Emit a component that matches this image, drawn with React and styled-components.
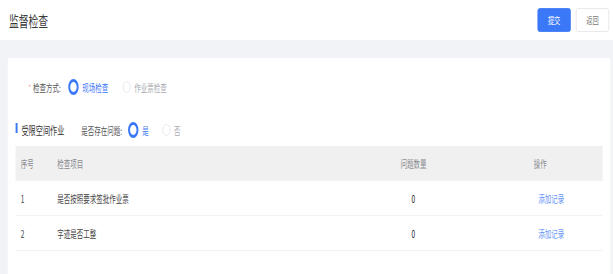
import styled, { createGlobalStyle } from "styled-components";

const GlobalStyle = createGlobalStyle`
  html, body {
    margin: 0;
    padding: 0;
    overflow: hidden;
    background: #f2f3f6;
  }
  * {
    box-sizing: border-box;
  }
`;

const FONT = `"Noto Sans CJK SC", "Noto Sans", sans-serif`;
const BLUE = "#3b78f7";

// the reference is a narrowed capture: lay out wide, then squeeze on x
const Page = styled.div`
  width: 943px;
  min-height: 274px;
  background: #f2f3f6;
  font-family: ${FONT};
  transform: scaleX(0.65);
  transform-origin: 0 0;
`;

const Header = styled.header`
  height: 40px;
  background: #ffffff;
  display: flex;
  align-items: center;
  padding: 0 6px 0 14px;
`;

const Title = styled.h1`
  flex: 1;
  margin: 0;
  font-size: 15px;
  font-weight: 400;
  color: #3a3a3a;
`;

const Actions = styled.div`
  display: flex;
  gap: 8px;
`;

const Button = styled.button`
  width: 51px;
  height: 24px;
  border-radius: 3px;
  font-family: ${FONT};
  font-size: 9.5px;
  padding: 0;
  cursor: pointer;
  border: 1px solid ${(p) => (p.$primary ? BLUE : "#e3e4e8")};
  background: ${(p) => (p.$primary ? BLUE : "#ffffff")};
  color: ${(p) => (p.$primary ? "#ffffff" : "#777777")};
`;

const Card = styled.main`
  margin: 18px 4px 0 12px;
  min-height: 216px;
  background: #ffffff;
  padding: 19px 12px 12px;
`;

const FormRow = styled.div`
  height: 20px;
  display: flex;
  align-items: center;
  padding-left: 20px;
  font-size: 10px;
`;

const Label = styled.label`
  color: #555555;
  margin-right: 11px;
  display: flex;
  align-items: center;

  &::before {
    content: "*";
    color: #f78a8a;
    font-size: 8px;
    margin-right: 3px;
  }
`;

const RadioGroup = styled.div`
  display: flex;
  align-items: center;
  gap: ${(p) => p.$gap || 22}px;
`;

const RadioItem = styled.span`
  display: flex;
  align-items: center;
  gap: 6px;
  font-size: 10px;
  color: ${(p) => (p.$checked ? BLUE : "#a9abb0")};

  &::before {
    content: "";
    flex: none;
    width: 10px;
    height: 10px;
    border-radius: 50%;
    background: #ffffff;
    border: ${(p) => (p.$checked ? `3.5px solid ${BLUE}` : "1px solid #e4e5e9")};
  }
`;

const SectionRow = styled.div`
  margin-top: 23px;
  height: 20px;
  display: flex;
  align-items: center;
`;

const SectionTitle = styled.h2`
  margin: 0 26px 0 0;
  font-size: 11px;
  font-weight: 400;
  color: #333333;
  display: flex;
  align-items: center;
  gap: 6px;

  &::before {
    content: "";
    width: 3px;
    height: 10px;
    margin-top: -5px;
    background: ${BLUE};
  }
`;

const QuestionLabel = styled.span`
  font-size: 10px;
  color: #555555;
  margin-right: 9px;
`;

const Table = styled.div`
  margin-top: 6px;
  font-size: 10px;
`;

const Row = styled.div`
  display: grid;
  grid-template-columns: 56px 379px 354px 1fr;
  height: 35px;
  align-items: center;
  background: ${(p) => (p.$head ? "#f0f0f1" : "#ffffff")};
  color: ${(p) => (p.$head ? "#888a8e" : "#444444")};
  border-bottom: 1px solid #f2f2f3;
`;

const Cell = styled.div`
  padding: 0 8px;
  text-align: ${(p) => (p.$center ? "center" : "left")};
  color: ${(p) => (p.$strong ? "#222222" : "inherit")};
`;

const LinkButton = styled.span`
  padding: 0 7px;
  color: #6494f8;
  cursor: pointer;
`;

const items = [
  { no: 1, name: "是否按照要求签批作业票", count: 0 },
  { no: 2, name: "字迹是否工整", count: 0 },
];

export default function App() {
  return (
    <>
      <GlobalStyle />
      <Page>
        <Header>
          <Title>监督检查</Title>
          <Actions>
            <Button $primary>提交</Button>
            <Button>返回</Button>
          </Actions>
        </Header>

        <Card>
          <FormRow>
            <Label>检查方式:</Label>
            <RadioGroup>
              <RadioItem $checked>现场检查</RadioItem>
              <RadioItem>作业票检查</RadioItem>
            </RadioGroup>
          </FormRow>

          <SectionRow>
            <SectionTitle>受限空间作业</SectionTitle>
            <QuestionLabel>是否存在问题:</QuestionLabel>
            <RadioGroup $gap={21}>
              <RadioItem $checked>是</RadioItem>
              <RadioItem>否</RadioItem>
            </RadioGroup>
          </SectionRow>

          <Table>
            <Row $head>
              <Cell>序号</Cell>
              <Cell>检查项目</Cell>
              <Cell $center>问题数量</Cell>
              <Cell>操作</Cell>
            </Row>
            {items.map((it) => (
              <Row key={it.no}>
                <Cell>{it.no}</Cell>
                <Cell>{it.name}</Cell>
                <Cell $center $strong>
                  {it.count}
                </Cell>
                <Cell>
                  <LinkButton>添加记录</LinkButton>
                </Cell>
              </Row>
            ))}
          </Table>
        </Card>
      </Page>
    </>
  );
}
